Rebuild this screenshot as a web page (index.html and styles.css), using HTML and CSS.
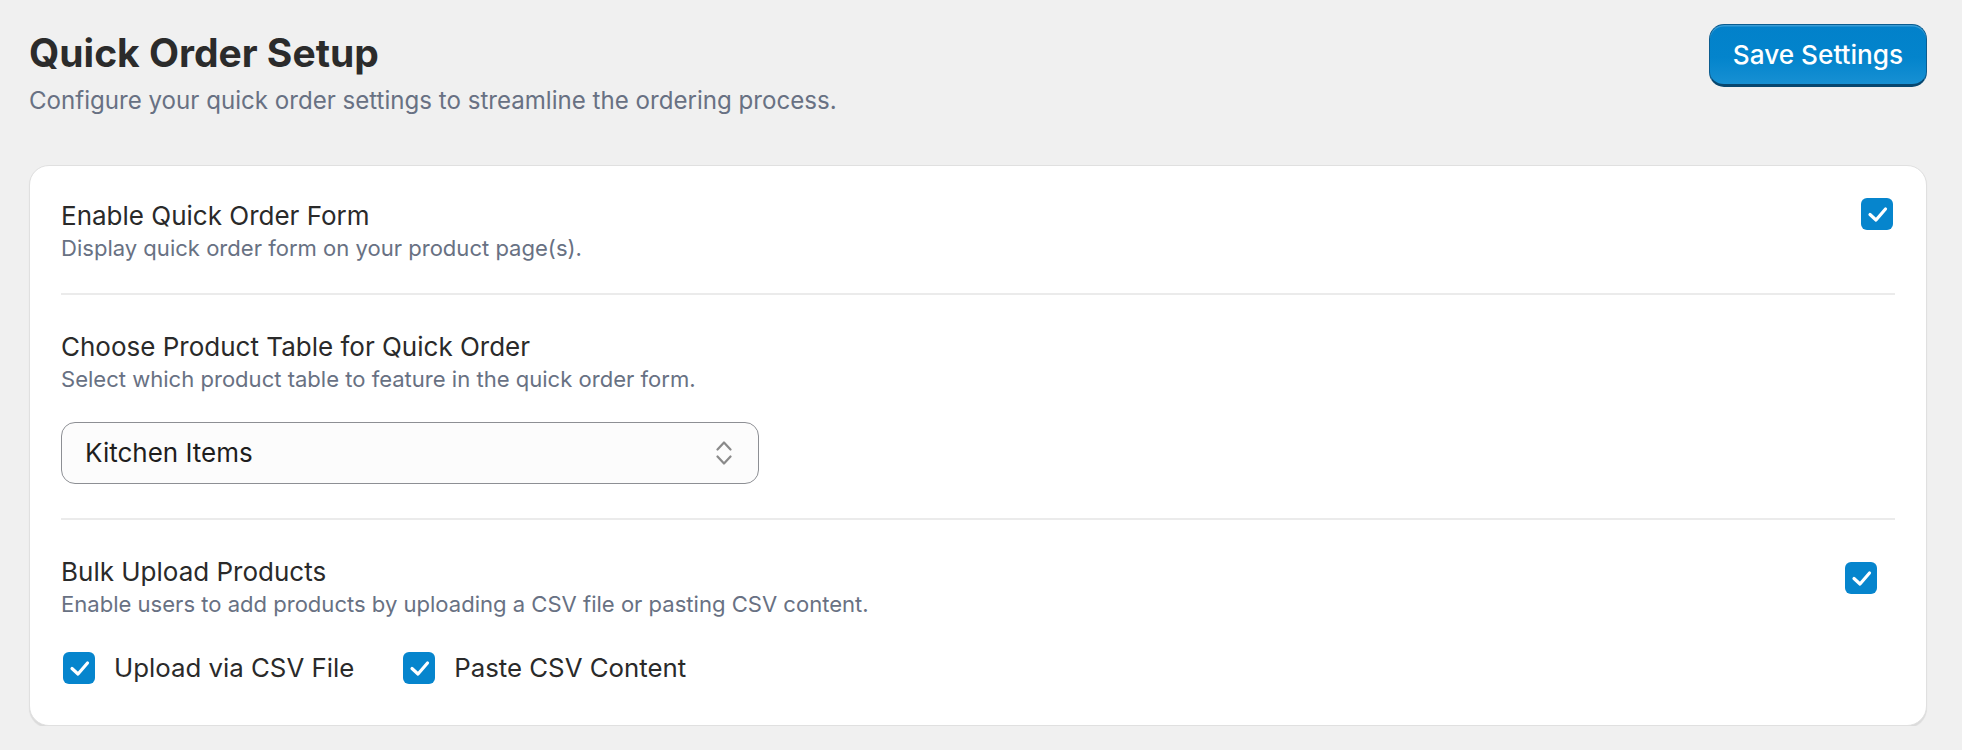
FILE: index.html
```html
<!DOCTYPE html>
<html lang="en">
<head>
<meta charset="utf-8">
<title>Quick Order Setup</title>
<link rel="stylesheet" href="styles.css">
</head>
<body>
<div class="page">
  <header class="header">
    <div class="heading">
      <h1 class="title">Quick Order Setup</h1>
      <p class="subtitle">Configure your quick order settings to streamline the ordering process.</p>
    </div>
    <button class="save-btn" type="button">Save Settings</button>
  </header>

  <section class="card">
    <div class="row row-enable">
      <div class="row-text">
        <div class="label">Enable Quick Order Form</div>
        <div class="desc">Display quick order form on your product page(s).</div>
      </div>
      <span class="checkbox cb-enable">
        <svg viewBox="0 0 32 32" width="32" height="32"><path d="M9 16.5l6 5.5 9.5-11" fill="none" stroke="#fff" stroke-width="3.2" stroke-linecap="round" stroke-linejoin="round"/></svg>
      </span>
    </div>

    <div class="row row-table">
      <div class="row-text">
        <div class="label">Choose Product Table for Quick Order</div>
        <div class="desc">Select which product table to feature in the quick order form.</div>
        <div class="select">
          <span class="select-value">Kitchen Items</span>
          <svg class="select-arrows" viewBox="0 0 16 26" width="16" height="26"><path d="M1.5 9.5l6.5-7 6.5 7M1.5 16.5l6.5 7 6.5-7" fill="none" stroke="#8a8a8a" stroke-width="2.2" stroke-linecap="round" stroke-linejoin="round"/></svg>
        </div>
      </div>
    </div>

    <div class="row row-bulk">
      <div class="row-text">
        <div class="label">Bulk Upload Products</div>
        <div class="desc">Enable users to add products by uploading a CSV file or pasting CSV content.</div>
        <div class="options">
          <label class="option">
            <span class="checkbox">
              <svg viewBox="0 0 32 32" width="32" height="32"><path d="M9 16.5l6 5.5 9.5-11" fill="none" stroke="#fff" stroke-width="3.2" stroke-linecap="round" stroke-linejoin="round"/></svg>
            </span>
            <span class="option-label">Upload via CSV File</span>
          </label>
          <label class="option">
            <span class="checkbox">
              <svg viewBox="0 0 32 32" width="32" height="32"><path d="M9 16.5l6 5.5 9.5-11" fill="none" stroke="#fff" stroke-width="3.2" stroke-linecap="round" stroke-linejoin="round"/></svg>
            </span>
            <span class="option-label">Paste CSV Content</span>
          </label>
        </div>
      </div>
      <span class="checkbox cb-bulk">
        <svg viewBox="0 0 32 32" width="32" height="32"><path d="M9 16.5l6 5.5 9.5-11" fill="none" stroke="#fff" stroke-width="3.2" stroke-linecap="round" stroke-linejoin="round"/></svg>
      </span>
    </div>
  </section>
</div>
</body>
</html>
```

FILE: styles.css
```css
* { box-sizing: border-box; }

html, body {
  margin: 0;
  padding: 0;
  background: #f0f0f0;
}

body {
  font-family: Inter, "Noto Sans", "Liberation Sans", sans-serif;
  color: #2a2a2a;
}

.page {
  padding: 24px 35px 0 29px;
}

.header {
  display: flex;
  justify-content: space-between;
  align-items: flex-start;
}

.title {
  margin: 6px 0 0 0;
  font-size: 39px;
  line-height: 45px;
  font-weight: 700;
  color: #2b2b2b;
}

.subtitle {
  margin: 10px 0 0 0;
  font-size: 24.1px;
  line-height: 31px;
  color: #687183;
}

.save-btn {
  width: 218px;
  height: 63px;
  font-family: Inter, "Noto Sans", "Liberation Sans", sans-serif;
  font-size: 26.2px;
  font-weight: 500;
  color: #fff;
  background: linear-gradient(#0281ca, #0384cc 55%, #1790d3);
  border: 1.5px solid #0b5d90;
  border-bottom: 3.5px solid #07476f;
  border-radius: 15px;
  box-shadow: inset 0 1.5px 0 rgba(255,255,255,0.22);
  padding: 0;
  cursor: pointer;
}

.card {
  margin-top: 49px;
  background: #fff;
  border: 1px solid #e0e0e0;
  border-radius: 20px;
  box-shadow: 0 1.5px 1px rgba(0,0,0,0.09);
  padding: 32px 31px 40px 31px;
}

.row {
  display: flex;
  justify-content: space-between;
  align-items: flex-start;
}

.row-enable {
  padding-bottom: 29px;
  border-bottom: 2px solid #ebebeb;
}

.row-table {
  padding: 34px 0;
  border-bottom: 2px solid #ebebeb;
}

.row-bulk {
  padding-top: 34px;
}

.label {
  font-size: 26px;
  line-height: 35px;
  color: #2a2a2a;
}

.desc {
  font-size: 22.05px;
  line-height: 30.8px;
  color: #687183;
}

.checkbox {
  display: inline-flex;
  width: 32px;
  height: 32px;
  flex: none;
  border-radius: 6px;
  background: #0685cd;
}

.checkbox svg { display: block; }

.cb-enable {
  margin-right: 2px;
}

.cb-bulk {
  margin-top: 8px;
  margin-right: 18px;
}

.select {
  margin-top: 27px;
  width: 698px;
  height: 62px;
  border: 1px solid #8d8f94;
  border-radius: 14px;
  background: #fcfcfc;
  display: flex;
  align-items: center;
  justify-content: space-between;
  padding: 0 26px 0 23px;
}

.select-value {
  font-size: 26px;
  color: #1e1e1e;
}

.select-arrows { display: block; }

.options {
  margin-top: 31px;
  padding-left: 2px;
  display: flex;
  align-items: center;
  gap: 49px;
}

.option {
  display: flex;
  align-items: center;
  gap: 19px;
}

.option-label {
  font-size: 25.8px;
  line-height: 35px;
  color: #2a2a2a;
}
```
